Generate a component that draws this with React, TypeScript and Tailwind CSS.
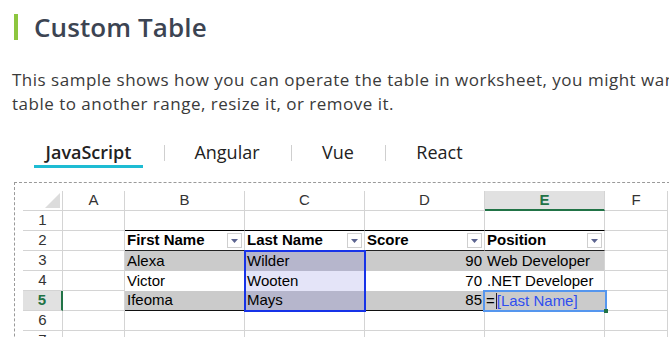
import React from "react";

const GRID = "border-[#d4d4d4]";

function Filter() {
  return (
    <div className="absolute right-[2px] top-[2px] w-[15px] h-[15px] border border-[#cfcfcf] bg-white flex items-center justify-center">
      <svg width="7" height="4" viewBox="0 0 7 4">
        <polygon points="0,0 7,0 3.5,4" fill="#5c6490" />
      </svg>
    </div>
  );
}

export default function App() {
  const colW = ["w-[62px]", "w-[120px]", "w-[120px]", "w-[120px]", "w-[120px]", "w-[63px]"];
  const letters = ["A", "B", "C", "D", "E", "F"];

  const rowHeader = (n: number) => (
    <div
      className={
        "w-[40px] h-[20px] shrink-0 border-b flex items-center justify-center " +
        GRID +
        (n === 5
          ? " bg-[#e1e1e1] border-r-2 border-r-[#217346] text-[#217346] font-bold"
          : " border-r text-[#333]")
      }
    >
      {n}
    </div>
  );

  const plain = (i: number, extra = "") => (
    <div key={i} className={colW[i] + " h-[20px] shrink-0 border-r border-b " + GRID + " " + extra}></div>
  );

  const data = [
    { f: "Alexa", l: "Wilder", s: "90", p: "Web Developer", gray: true },
    { f: "Victor", l: "Wooten", s: "70", p: ".NET Developer", gray: false },
    { f: "Ifeoma", l: "Mays", s: "85", p: "", gray: true },
  ];

  return (
    <div className="w-[669px] h-[337px] overflow-hidden bg-white relative">
      <div className="mt-[14px] ml-[14px] h-[26px] border-l-4 border-[#8dc63f] pl-[16px] flex items-center text-[26px] leading-[26px] font-semibold text-[#3c4452] tracking-[0.1px]" style={{ fontFamily: "'Open Sans', sans-serif" }}>
        Custom Table
      </div>

      <div className="mt-[28px] ml-[12px] text-[17px] leading-[24px] text-[#3a3a3a] whitespace-nowrap tracking-[0.5px]" style={{ fontFamily: "'Open Sans', sans-serif" }}>
        <div>This sample shows how you can operate the table in worksheet, you might want to move the</div>
        <div>table to another range, resize it, or remove it.</div>
      </div>

      <div className="mt-[23px] flex items-start h-[28px] text-[18px] text-[#222]" style={{ fontFamily: "'Open Sans', sans-serif" }}>
        <div className="ml-[34px] w-[109px] h-[29px] border-b-[3px] border-[#1ebcd3] flex items-center justify-center font-semibold">JavaScript</div>
        <div className="ml-[21px] mt-[6px] w-px h-[16px] bg-[#cfcfcf]"></div>
        <div className="ml-[20px] w-[84px] h-[26px] flex items-center justify-center">Angular</div>
        <div className="ml-[22px] mt-[6px] w-px h-[16px] bg-[#cfcfcf]"></div>
        <div className="ml-[15px] w-[62px] h-[26px] flex items-center justify-center">Vue</div>
        <div className="ml-[16px] mt-[6px] w-px h-[16px] bg-[#cfcfcf]"></div>
        <div className="ml-[15px] w-[77px] h-[26px] flex items-center justify-center">React</div>
      </div>

      <div
        className="mt-[15px] ml-[14px] w-[656px] h-[200px] border border-dashed border-[#9a9a9a] pt-[8px] pl-[8px] overflow-hidden text-[15px] text-black"
        style={{ fontFamily: "'Liberation Sans', Arial, sans-serif" }}
      >
        {/* column header */}
        <div className="flex">
          <div className={"w-[40px] h-[20px] shrink-0 border-r border-b relative " + GRID}>
            <svg className="absolute right-[2px] bottom-[2px]" width="15" height="15" viewBox="0 0 15 15">
              <polygon points="15,0 15,15 0,15" fill="#dcdcdc" />
            </svg>
          </div>
          {letters.map((L, i) => (
            <div
              key={L}
              className={
                colW[i] +
                " h-[20px] shrink-0 border-r flex items-center justify-center " +
                GRID +
                (L === "E"
                  ? " bg-[#e1e1e1] border-b-2 border-b-[#217346] text-[#217346] font-bold"
                  : " border-b text-[#333]")
              }
            >
              {L}
            </div>
          ))}
        </div>

        {/* row 1 */}
        <div className="flex">
          {rowHeader(1)}
          {plain(0)}
          {[1, 2, 3, 4].map((i) => (
            <div key={i} className={colW[i] + " h-[20px] shrink-0 border-r border-b border-r-[#d4d4d4] border-b-black"}></div>
          ))}
          {plain(5)}
        </div>

        {/* row 2 header */}
        <div className="flex">
          {rowHeader(2)}
          {plain(0)}
          {["First Name", "Last Name", "Score", "Position"].map((h, i) => (
            <div key={h} className={colW[i + 1] + " h-[20px] shrink-0 border-r border-b border-r-[#d4d4d4] border-b-[#222] relative font-bold pl-[2px] flex items-center"}>
              {h}
              <Filter />
            </div>
          ))}
          {plain(5)}
        </div>

        {/* data rows */}
        {data.map((r, idx) => {
          const n = idx + 3;
          const last = idx === 2;
          const bg = r.gray ? "bg-[#cbcbcb]" : "bg-white";
          const selBg = r.gray ? "bg-[#b6b6cc]" : "bg-[#e4e4f8]";
          const bb = last ? "border-b border-b-[#111]" : "";
          return (
            <div key={n} className="flex">
              {rowHeader(n)}
              {plain(0)}
              <div className={colW[1] + " h-[20px] shrink-0 pl-[2px] flex items-center " + bg + " " + bb}>
                {r.f}
              </div>
              <div className={colW[2] + " h-[20px] shrink-0 pl-[2px] flex items-center relative " + selBg + " " + bb}>
                {r.l}
                <div
                  className={
                    "absolute left-[-1px] right-[-1px] border-[#1733e8] border-l-2 border-r-2 " +
                    (idx === 0 ? "top-[-1px] border-t-2 " : "top-0 ") +
                    (last ? "bottom-[-2px] border-b-2" : "bottom-0")
                  }
                ></div>
              </div>
              <div className={colW[3] + " h-[20px] shrink-0 pr-[3px] flex items-center justify-end " + bg + " " + bb}>
                {r.s}
              </div>
              <div className={colW[4] + " h-[20px] shrink-0 pl-[2px] flex items-center relative " + bg + " " + bb + (last ? "" : " border-r border-r-[#d4d4d4]")}>
                {r.p}
                {last && (
                  <div className="absolute left-[-2px] top-[-1px] w-[124px] h-[22px] border-2 border-[#5596ee] bg-[#cbcbcb] flex items-center pl-[1px] z-10">
                    <span>=</span>
                    <span className="inline-block w-px h-[16px] bg-[#222] ml-[1px]"></span>
                    <span className="text-[#2f4ef0]">[Last Name]</span>
                    <div className="absolute right-[-3px] bottom-[-3px] w-[4px] h-[4px] bg-[#217346]"></div>
                  </div>
                )}
              </div>
              {plain(5)}
            </div>
          );
        })}

        {[6, 7].map((n) => (
          <div key={n} className="flex">
            {rowHeader(n)}
            {[0, 1, 2, 3, 4, 5].map((i) => plain(i))}
          </div>
        ))}
      </div>
    </div>
  );
}
